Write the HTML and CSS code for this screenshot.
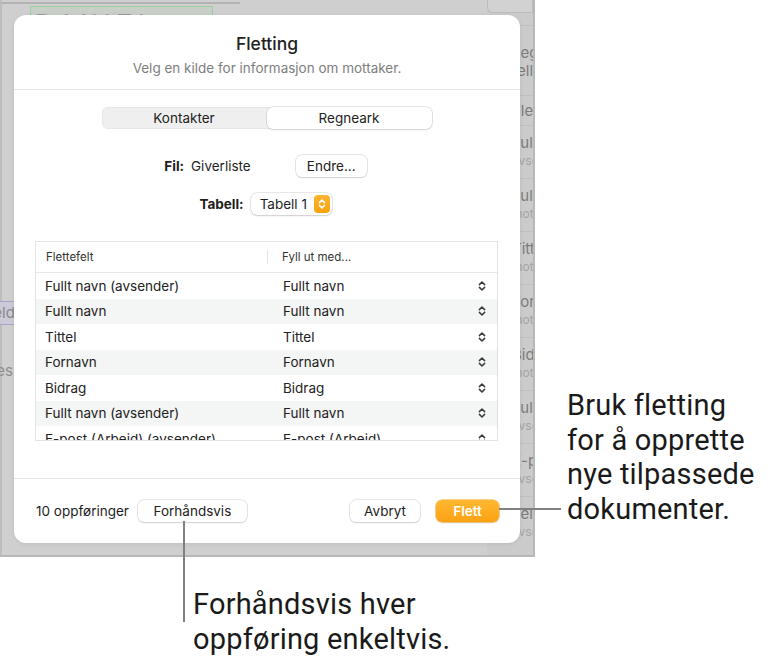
FILE: index.html
```html
<!DOCTYPE html>
<html lang="no">
<head>
  <meta charset="UTF-8" />
  <meta name="viewport" content="width=device-width, initial-scale=1.0" />
  <title>Fletting</title>
  <link rel="stylesheet" href="styles.css">
</head>
<body>

  <div class="app">
    <!-- document behind the sheet -->
    <div class="doc">
      <div class="doc-ruler"></div>
      <div class="doc-name">DANIEL RUSE</div>
      <div class="doc-field">Feld</div>
      <div class="doc-word">Hilses</div>
    </div>

    <div class="sidebar">
      <div class="side-top"></div>
      <div class="side-item tall"><span class="l1">Legg til</span><span class="l1">felle</span></div>
      <div class="side-item short"><span class="l1">Fletfelt</span></div>
      <div class="side-item"><span class="l1">Fullt navn</span><span class="l2">avsender</span></div>
      <div class="side-item"><span class="l1">Fullt navn</span><span class="l2">mottaker</span></div>
      <div class="side-item"><span class="l1">Tittel</span><span class="l2">mottaker</span></div>
      <div class="side-item"><span class="l1">Fornavn</span><span class="l2">mottaker</span></div>
      <div class="side-item"><span class="l1">Bidrag</span><span class="l2">mottaker</span></div>
      <div class="side-item"><span class="l1">Fullt navn</span><span class="l2">avsender</span></div>
      <div class="side-item"><span class="l1">E-post</span><span class="l2">avsender</span></div>
      <div class="side-item"><span class="l1">Telefon</span><span class="l2">avsender</span></div>
    </div>

    <!-- merge sheet -->
    <div class="dialog">
      <div class="dlg-head">
        <div class="dlg-title">Fletting</div>
        <div class="dlg-sub">Velg en kilde for informasjon om mottaker.</div>
      </div>

      <div class="dlg-body">
        <div class="segment">
          <div class="seg">Kontakter</div>
          <div class="seg selected">Regneark</div>
        </div>

        <div class="file-row">
          <span class="lbl">Fil:</span>
          <span class="file-name">Giverliste</span>
          <button class="btn change">Endre...</button>
        </div>

        <div class="table-row">
          <span class="lbl">Tabell:</span>
          <div class="popup">
            <span>Tabell 1</span>
            <span class="popup-arrows">
              <svg width="8" height="12" viewBox="0 0 8 12"><path d="M1.5 4.6 L4 2.1 L6.5 4.6 M1.5 7.4 L4 9.9 L6.5 7.4" fill="none" stroke="#fff" stroke-width="1.5" stroke-linecap="round" stroke-linejoin="round"/></svg>
            </span>
          </div>
        </div>

        <div class="fields">
          <div class="fields-head">
            <div class="col-a">Flettefelt</div>
            <div class="col-b">Fyll ut med...</div>
          </div>
          <div class="fields-list" id="fields"></div>
        </div>
      </div>

      <div class="dlg-foot">
        <span class="count">10 oppføringer</span>
        <button class="btn preview">Forhåndsvis</button>
        <span class="spacer"></span>
        <button class="btn cancel">Avbryt</button>
        <button class="btn primary">Flett</button>
      </div>
    </div>
  </div>

  <!-- callouts -->
  <div class="callout-right">
    <div class="lead-h"></div>
    <p>Bruk fletting<br>for å opprette<br>nye tilpassede<br>dokumenter.</p>
  </div>

  <div class="callout-bottom">
    <div class="lead-v"></div>
    <p>Forhåndsvis hver<br>oppføring enkeltvis.</p>
  </div>

  <script>
    const rows = [
      ["Fullt navn (avsender)", "Fullt navn"],
      ["Fullt navn", "Fullt navn"],
      ["Tittel", "Tittel"],
      ["Fornavn", "Fornavn"],
      ["Bidrag", "Bidrag"],
      ["Fullt navn (avsender)", "Fullt navn"],
      ["E-post (Arbeid) (avsender)", "E-post (Arbeid)"]
    ];

    const chevron = '<svg width="8" height="12" viewBox="0 0 8 12"><path d="M1.4 4.6 L4 2 L6.6 4.6 M1.4 7.4 L4 10 L6.6 7.4" fill="none" stroke="#3a3a3a" stroke-width="1.5" stroke-linecap="round" stroke-linejoin="round"/></svg>';

    const list = document.getElementById("fields");
    rows.forEach(r => {
      const row = document.createElement("div");
      row.className = "field";
      row.innerHTML = '<div class="col-a">' + r[0] + '</div><div class="col-b">' + r[1] + '</div><div class="col-c">' + chevron + '</div>';
      list.appendChild(row);
    });
  </script>

</body>
</html>
```

FILE: styles.css
```css
body {
  margin: 0;
  width: 771px;
  height: 660px;
  position: relative;
  overflow: hidden;
  background: #ffffff;
  font-family: Inter, "Noto Sans", sans-serif;
  color: #1e1e1e;
}

/* background app window */

.app {
  position: relative;
  width: 535px;
  height: 557px;
  box-sizing: border-box;
  display: flex;
  background: #cfcfcf;
  border-right: 2px solid #b8b8b8;
  border-bottom: 2px solid #b8b8b8;
  overflow: hidden;
}

.doc {
  flex: 1;
  position: relative;
  border-left: 2px solid #bdbdbd;
}

.doc-ruler {
  width: 238px;
  height: 2px;
  margin-top: 2px;
  background: #b3b3b3;
}

.doc-name {
  margin: 2px 0 0 28px;
  width: 183px;
  height: 30px;
  border: 1px solid #9bcf9b;
  background: #c7cfc6;
  font-family: "Liberation Sans", sans-serif;
  font-size: 24px;
  letter-spacing: 6px;
  line-height: 32px;
  color: #9a9a9a;
  padding-left: 4px;
  box-sizing: border-box;
}

.doc-field {
  margin-top: 265px;
  width: 34px;
  margin-left: -20px;
  height: 22px;
  border: 1px solid #a9a3cf;
  background: #cbcad6;
  color: #8a8a8a;
  font-size: 15px;
  line-height: 22px;
  padding-left: 2px;
}

.doc-word {
  margin: 36px 0 0 -32px;
  color: #8e8e8e;
  font-size: 15px;
}

.sidebar {
  width: 46px;
  display: flex;
  flex-direction: column;
  background: #cbcbcb;
}

.side-top {
  height: 12px;
  flex: none;
  border: 1px solid #bcbcbc;
  border-top: none;
  border-radius: 0 0 0 6px;
  background: #d2d2d2;
  margin-bottom: 12px;
}

.side-item {
  height: 53px;
  flex: none;
  box-sizing: border-box;
  border-top: 1px solid #c0c0c0;
  padding: 8px 0 0 25px;
  display: flex;
  flex-direction: column;
  white-space: nowrap;
  overflow: hidden;
}

.side-item.tall {
  height: 70px;
  padding-top: 18px;
}

.side-item.short {
  height: 30px;
  padding-top: 6px;
}

.side-item .l1 {
  font-size: 15px;
  line-height: 18px;
  color: #7c7c7c;
}

.side-item .l2 {
  font-size: 12px;
  line-height: 17px;
  color: #a4a4a4;
}

/* sheet */

.dialog {
  position: absolute;
  left: 14px;
  top: 15px;
  width: 506px;
  height: 528px;
  background: #ffffff;
  border-radius: 12px;
  box-shadow: 0 1px 4px rgba(0,0,0,0.08);
  display: flex;
  flex-direction: column;
  overflow: hidden;
}

.dlg-head {
  height: 75px;
  flex: none;
  box-sizing: border-box;
  padding-top: 19px;
  text-align: center;
  border-bottom: 1px solid #e6e6e6;
}

.dlg-title {
  font-size: 17.5px;
  line-height: 20px;
  font-weight: 500;
  color: #222;
}

.dlg-sub {
  margin-top: 6px;
  font-size: 13.5px;
  line-height: 16px;
  color: #7e7e7e;
}

.dlg-body {
  flex: 1;
  padding: 17px 22px 0 21px;
}

.segment {
  width: 330px;
  height: 22px;
  margin: 0 auto;
  display: flex;
  background: #efefef;
  border-radius: 6px;
  box-shadow: inset 0 0 0 0.5px #e0e0e0;
}

.seg {
  flex: 1;
  text-align: center;
  font-size: 13.5px;
  line-height: 22px;
  color: #222;
}

.seg.selected {
  background: #fff;
  border-radius: 6px;
  box-shadow: 0 0 0 0.5px #c8c8c8, 0 1px 2px rgba(0,0,0,0.12);
}

.file-row,
.table-row {
  display: flex;
  justify-content: center;
  align-items: center;
  height: 22px;
  font-size: 13.5px;
}

.file-row {
  margin-top: 26px;
  padding-right: 2px;
}

.table-row {
  margin-top: 16px;
  padding-right: 2px;
}

.lbl {
  font-weight: 700;
  margin-right: 7px;
}

.file-name {
  margin-right: 45px;
}

.btn {
  font-family: Inter, "Noto Sans", sans-serif;
  font-size: 13.5px;
  color: #222;
  height: 22px;
  padding: 0 11px;
  background: #fff;
  border: none;
  border-radius: 6px;
  box-shadow: 0 0 0 0.5px #cfcfcf, 0 1px 1.5px rgba(0,0,0,0.18);
}

.change {
  width: 71px;
  padding: 0;
}

.popup {
  display: flex;
  align-items: center;
  height: 22px;
  width: 81px;
  box-sizing: border-box;
  padding: 0 2px 0 9px;
  border-radius: 6px;
  box-shadow: 0 0 0 0.5px #cfcfcf, 0 1px 1.5px rgba(0,0,0,0.18);
}

.popup-arrows {
  margin-left: auto;
  width: 16px;
  height: 18px;
  border-radius: 4px;
  background: linear-gradient(#fdb431, #f8a20f);
  display: flex;
  align-items: center;
  justify-content: center;
}

/* field table */

.fields {
  margin-top: 26px;
  height: 200px;
  border: 1px solid #e3e3e3;
  box-sizing: border-box;
  overflow: hidden;
}

.fields-head {
  height: 30px;
  display: flex;
  align-items: center;
  border-bottom: 1px solid #e8e8e8;
  font-size: 11.5px;
  color: #333;
}

.fields-head .col-a {
  width: 232px;
  padding-left: 10px;
  box-sizing: border-box;
  border-right: 1px solid #e3e3e3;
  line-height: 14px;
}

.fields-head .col-b {
  padding-left: 14px;
}

.field {
  height: 25.5px;
  display: flex;
  align-items: center;
  font-size: 13.5px;
  color: #222;
}

.field:nth-child(even) {
  background: #f4f5f5;
}

.field .col-a {
  width: 247px;
  padding-left: 9px;
  box-sizing: border-box;
  white-space: nowrap;
}

.field .col-b {
  flex: 1;
}

.field .col-c {
  width: 30px;
  display: flex;
  justify-content: center;
}

/* footer */

.dlg-foot {
  height: 65px;
  flex: none;
  box-sizing: border-box;
  border-top: 1px solid #e6e6e6;
  padding: 0 21px 0 22px;
  display: flex;
  align-items: center;
  font-size: 13.5px;
}

.count {
  margin-right: 9px;
}

.preview {
  width: 109px;
}

.spacer {
  flex: 1;
}

.cancel {
  width: 70px;
  margin-right: 16px;
}

.primary {
  width: 63px;
  color: #fff;
  font-weight: 600;
  background: linear-gradient(#ffb731, #fba313);
  box-shadow: 0 0 0 0.5px #f0a020, 0 1px 1.5px rgba(0,0,0,0.15);
}

/* annotations */

.callout-right p,
.callout-bottom p {
  margin: 0;
  font-family: Roboto, "Liberation Sans", sans-serif;
  font-size: 29px;
  line-height: 34.5px;
  letter-spacing: 0.2px;
  color: #1a1a1a;
  white-space: nowrap;
}

.callout-right {
  position: absolute;
  left: 499px;
  top: 388px;
  display: flex;
  align-items: flex-end;
}

.lead-h {
  width: 62px;
  height: 2px;
  background: #808080;
  margin: 0 6px 16px 0;
}

.callout-bottom {
  position: absolute;
  left: 183px;
  top: 521px;
  display: flex;
  align-items: flex-end;
}

.lead-v {
  width: 2px;
  height: 101px;
  background: #808080;
  margin-right: 8px;
  margin-bottom: 34px;
}
```
